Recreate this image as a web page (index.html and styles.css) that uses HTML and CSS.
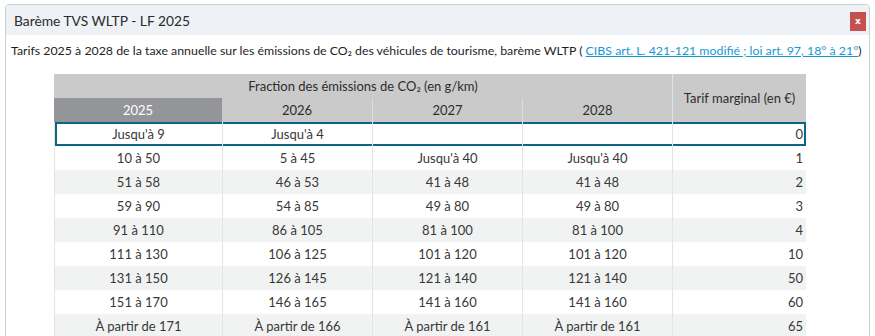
FILE: index.html
```html
<!DOCTYPE html>
<html lang="fr">
<head>
<meta charset="utf-8">
<title>Barème TVS WLTP - LF 2025</title>
<link rel="stylesheet" href="styles.css">
</head>
<body>
<div class="dialog">
  <div class="titlebar">
    <span class="title">Barème TVS WLTP - LF 2025</span>
    <button class="close" type="button">x</button>
  </div>
  <div class="content">
    <p class="desc">Tarifs 2025 à 2028 de la taxe annuelle sur les émissions de CO₂ des véhicules de tourisme, barème WLTP ( <a href="#">CIBS art. L. 421-121 modifié ; loi art. 97, 18° à 21°</a>)</p>
    <table class="bareme">
      <colgroup>
        <col class="c-first">
        <col class="c-year">
        <col class="c-year">
        <col class="c-year">
        <col class="c-tarif">
      </colgroup>
      <thead>
        <tr>
          <th colspan="4" class="group">Fraction des émissions de CO₂ (en g/km)</th>
          <th rowspan="2" class="tarif-h">Tarif marginal (en €)</th>
        </tr>
        <tr>
          <th class="year current">2025</th>
          <th class="year first-light">2026</th>
          <th class="year">2027</th>
          <th class="year">2028</th>
        </tr>
      </thead>
      <tbody>
        <tr class="selected"><td>Jusqu'à 9</td><td>Jusqu'à 4</td><td></td><td></td><td class="num">0</td></tr>
        <tr><td>10 à 50</td><td>5 à 45</td><td>Jusqu'à 40</td><td>Jusqu'à 40</td><td class="num">1</td></tr>
        <tr><td>51 à 58</td><td>46 à 53</td><td>41 à 48</td><td>41 à 48</td><td class="num">2</td></tr>
        <tr><td>59 à 90</td><td>54 à 85</td><td>49 à 80</td><td>49 à 80</td><td class="num">3</td></tr>
        <tr><td>91 à 110</td><td>86 à 105</td><td>81 à 100</td><td>81 à 100</td><td class="num">4</td></tr>
        <tr><td>111 à 130</td><td>106 à 125</td><td>101 à 120</td><td>101 à 120</td><td class="num">10</td></tr>
        <tr><td>131 à 150</td><td>126 à 145</td><td>121 à 140</td><td>121 à 140</td><td class="num">50</td></tr>
        <tr><td>151 à 170</td><td>146 à 165</td><td>141 à 160</td><td>141 à 160</td><td class="num">60</td></tr>
        <tr><td>À partir de 171</td><td>À partir de 166</td><td>À partir de 161</td><td>À partir de 161</td><td class="num">65</td></tr>
      </tbody>
    </table>
  </div>
</div>
</body>
</html>
```

FILE: styles.css
```css
html, body {
  margin: 0;
  padding: 0;
  background: #ffffff;
}

body {
  font-family: "Lato", "Liberation Sans", sans-serif;
  font-size: 13px;
  color: #222222;
  overflow: hidden;
}

.dialog {
  margin: 4px 5px 0 5px;
  border: 1px solid #cfcfcf;
  border-radius: 4px;
  height: 420px;
  background: #ffffff;
  overflow: hidden;
}

.titlebar {
  display: flex;
  align-items: center;
  justify-content: space-between;
  height: 30px;
  background: #eef1f5;
  padding: 0 3px 0 8px;
}

.title {
  font-size: 13.8px;
  color: #2b2b2b;
}

.close {
  width: 16px;
  height: 19px;
  margin-top: 3px;
  border: none;
  padding: 0;
  background: #c64f50;
  color: #ffffff;
  font-family: "DejaVu Sans", sans-serif;
  font-weight: bold;
  font-size: 9px;
  line-height: 19px;
  text-align: center;
}

.content {
  padding: 7px 0 0 5px;
}

.desc {
  margin: 0;
  font-size: 12.35px;
  line-height: 18px;
  color: #1e1e1e;
  white-space: nowrap;
}

.desc a {
  color: #1698d3;
  text-decoration: underline;
}

.bareme {
  margin: 14px 0 0 43px;
  width: 752px;
  table-layout: fixed;
  border-collapse: separate;
  border-spacing: 0;
  color: #383838;
}

.c-first { width: 168px; }
.c-year { width: 150px; }
.c-tarif { width: 134px; }

.bareme th {
  height: 24px;
  padding: 0;
  font-weight: normal;
  background: #c9cac9;
  color: #2d2d2d;
  text-align: center;
  vertical-align: middle;
}

.bareme .year {
  border-left: 1px solid #dcdddc;
}

.bareme .year.current,
.bareme .year.first-light {
  border-left: none;
}

.bareme .year.current {
  background: #939598;
  color: #ffffff;
}

.bareme .tarif-h {
  border-left: 1px solid #e0e1e0;
}

.bareme td {
  height: 24px;
  padding: 0;
  text-align: center;
  vertical-align: middle;
  border-left: 1px solid #e3e3e3;
  background: #ffffff;
}

.bareme td.num {
  text-align: right;
  padding-right: 3px;
}

.bareme tbody tr:nth-child(2n+3) td {
  background: #f1f2f2;
}

.bareme tr.selected td {
  box-shadow: inset 0 2px 0 #0d6487, inset 0 -2px 0 #0d6487;
}

.bareme tr.selected td:first-child {
  box-shadow: inset 2px 0 0 #0d6487, inset 0 2px 0 #0d6487, inset 0 -2px 0 #0d6487;
}

.bareme tr.selected td:last-child {
  box-shadow: inset -2px 0 0 #0d6487, inset 0 2px 0 #0d6487, inset 0 -2px 0 #0d6487;
}
```
